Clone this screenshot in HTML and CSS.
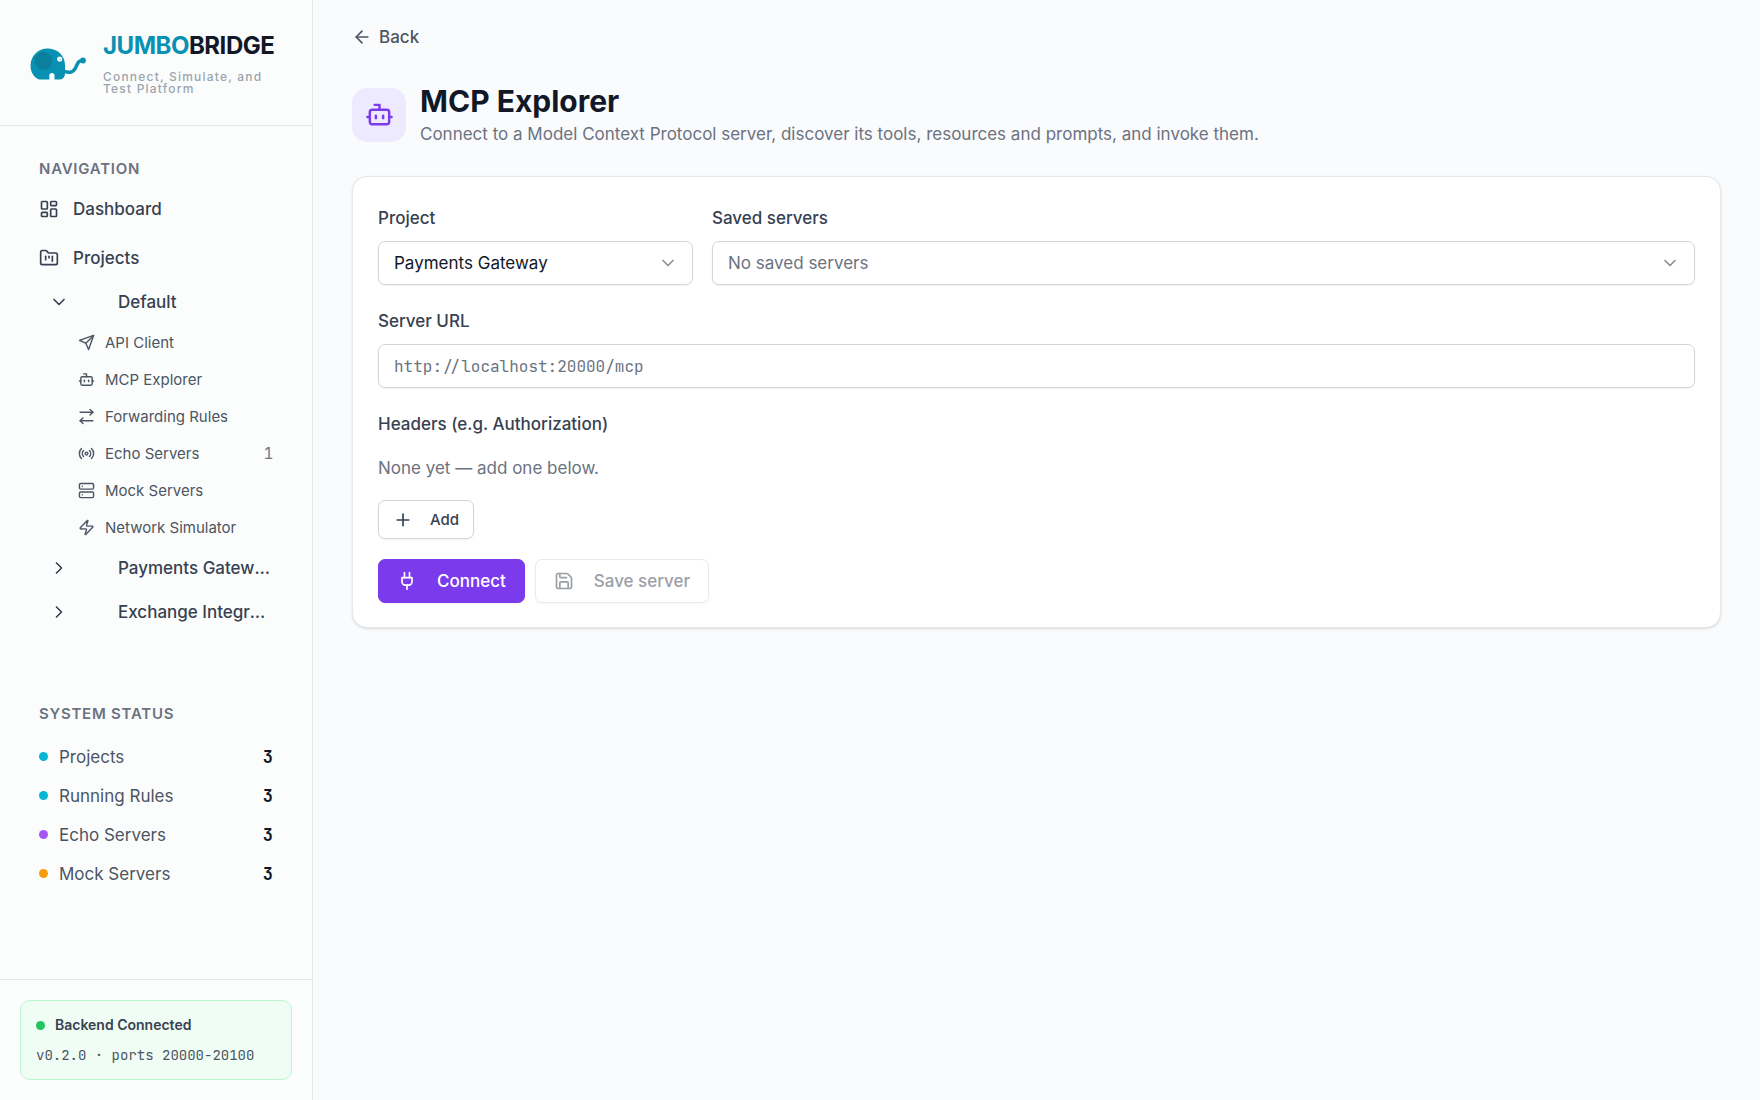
FILE: index.html
```html
<!DOCTYPE html>
<html lang="en">
<head>
    <meta charset="utf-8">
    <title>MCP Explorer - JumboBridge</title>
    <link rel="stylesheet" href="styles.css">
</head>
<body>
    <aside class="sidebar">
        <div class="brand">
            <svg class="logo" viewBox="0 0 56 32" aria-hidden="true">
                <path d="M0.500 17.500A17 17 0 0 1 17.500 .500C27 .500 35 7 35 17V26a5.500 5.500 0 0 1-5.500 5.500H24.500V27.500a2.600 2.600 0 0 0-5.200 0V31.500H9C4 29.500 .500 24 .500 17.500z" fill="#0891b2"/>
                <circle cx="13.500" cy="13" r="9" fill="#0e7490" opacity=".6"/>
                <path d="M33 22.500c5 3 10 2.500 12.500-2.500s2.500-7.500 7-7.500" fill="none" stroke="#0891b2" stroke-width="3.500" stroke-linecap="round"/>
                <circle cx="53" cy="12.500" r="2.900" fill="#0891b2"/>
                <circle cx="29.700" cy="11" r="2.600" fill="#fff"/>
                <circle cx="30.300" cy="11.400" r=".7" fill="#0891b2" opacity=".5"/>
            </svg>
            <div>
                <div class="brand-name"><span>JUMBO</span>BRIDGE</div>
                <div class="brand-tag">Connect, Simulate, and Test Platform</div>
            </div>
        </div>

        <nav class="nav">
            <h2 class="section-title">Navigation</h2>
            <div class="nav-main">
                <a class="nav-link" href="#">
                    <svg class="icon" viewBox="0 0 24 24"><rect x="3" y="3" width="7" height="9" rx="1"/><rect x="14" y="3" width="7" height="5" rx="1"/><rect x="14" y="12" width="7" height="9" rx="1"/><rect x="3" y="16" width="7" height="5" rx="1"/></svg>
                    Dashboard
                </a>
                <a class="nav-link" href="#">
                    <svg class="icon" viewBox="0 0 24 24"><path d="M4 20h16a2 2 0 0 0 2-2V8a2 2 0 0 0-2-2h-7.930a2 2 0 0 1-1.660-.900l-.820-1.200A2 2 0 0 0 7.930 3H4a2 2 0 0 0-2 2v13c0 1.100.900 2 2 2Z"/><path d="M8 10v4"/><path d="M12 10v2"/><path d="M16 10v6"/></svg>
                    Projects
                </a>
            </div>
            <button class="project" type="button" aria-expanded="true">
                <svg class="icon" viewBox="0 0 24 24"><path d="m6 9 6 6 6-6"/></svg>
                <span>Default</span>
            </button>
            <div class="sub-list">
                <a class="sub-link" href="#">
                    <svg class="icon" viewBox="0 0 24 24"><path d="m22 2-7 20-4-9-9-4Z"/><path d="M22 2 11 13"/></svg>
                    API Client
                </a>
                <a class="sub-link" href="#">
                    <svg class="icon" viewBox="0 0 24 24"><path d="M12 8V4H8"/><rect x="4" y="8" width="16" height="12" rx="2"/><path d="M2 14h2"/><path d="M20 14h2"/><path d="M15 13v2"/><path d="M9 13v2"/></svg>
                    MCP Explorer
                </a>
                <a class="sub-link" href="#">
                    <svg class="icon" viewBox="0 0 24 24"><path d="m17 2 4 4-4 4"/><path d="M3 6h18"/><path d="m7 22-4-4 4-4"/><path d="M21 18H3"/></svg>
                    Forwarding Rules
                </a>
                <a class="sub-link" href="#">
                    <svg class="icon" viewBox="0 0 24 24"><path d="M4.900 19.100C1 15.200 1 8.800 4.900 4.900"/><path d="M7.800 16.200c-2.300-2.300-2.300-6.100 0-8.500"/><circle cx="12" cy="12" r="2"/><path d="M16.200 7.800c2.300 2.300 2.300 6.100 0 8.500"/><path d="M19.100 4.900C23 8.800 23 15.100 19.100 19"/></svg>
                    Echo Servers
                    <span class="sub-count">1</span>
                </a>
                <a class="sub-link" href="#">
                    <svg class="icon" viewBox="0 0 24 24"><rect x="2" y="2" width="20" height="8" rx="2"/><rect x="2" y="14" width="20" height="8" rx="2"/><path d="M6 6h.010"/><path d="M6 18h.010"/></svg>
                    Mock Servers
                </a>
                <a class="sub-link" href="#">
                    <svg class="icon" viewBox="0 0 24 24"><path d="M4 14a1 1 0 0 1-.780-1.630l9.900-10.200a.5.5 0 0 1 .860.460l-1.920 6.020A1 1 0 0 0 13 10h7a1 1 0 0 1 .780 1.630l-9.900 10.200a.5.5 0 0 1-.860-.460l1.920-6.020A1 1 0 0 0 11 14z"/></svg>
                    Network Simulator
                </a>
            </div>
            <button class="project" type="button" aria-expanded="false">
                <svg class="icon" viewBox="0 0 24 24"><path d="m9 18 6-6-6-6"/></svg>
                <span>Payments Gateway</span>
            </button>
            <button class="project" type="button" aria-expanded="false">
                <svg class="icon" viewBox="0 0 24 24"><path d="m9 18 6-6-6-6"/></svg>
                <span>Exchange Integration</span>
            </button>
        </nav>

        <section class="status">
            <h2 class="section-title">System Status</h2>
            <ul class="status-list">
                <li><i class="dot cyan"></i>Projects<b>3</b></li>
                <li><i class="dot cyan"></i>Running Rules<b>3</b></li>
                <li><i class="dot purple"></i>Echo Servers<b>3</b></li>
                <li><i class="dot amber"></i>Mock Servers<b>3</b></li>
            </ul>
        </section>

        <footer class="sidebar-footer">
            <div class="backend">
                <div class="backend-title"><i class="dot green"></i>Backend Connected</div>
                <div class="backend-info">v0.2.0 · ports 20000-20100</div>
            </div>
        </footer>
    </aside>

    <main class="main">
        <a class="back" href="#">
            <svg class="icon" viewBox="0 0 24 24"><path d="m12 19-7-7 7-7"/><path d="M19 12H5"/></svg>
            Back
        </a>

        <header class="page-header">
            <div class="page-icon">
                <svg class="icon" viewBox="0 0 24 24"><path d="M12 8V4H8"/><rect x="4" y="8" width="16" height="12" rx="2"/><path d="M2 14h2"/><path d="M20 14h2"/><path d="M15 13v2"/><path d="M9 13v2"/></svg>
            </div>
            <div>
                <h1>MCP Explorer</h1>
                <p>Connect to a Model Context Protocol server, discover its tools, resources and prompts, and invoke them.</p>
            </div>
        </header>

        <form class="card">
            <div class="server-row">
                <div class="field">
                    <label for="project">Project</label>
                    <div class="select">
                        <select id="project">
                            <option>Payments Gateway</option>
                        </select>
                        <svg class="icon" viewBox="0 0 24 24"><path d="m6 9 6 6 6-6"/></svg>
                    </div>
                </div>
                <div class="field">
                    <label for="saved">Saved servers</label>
                    <div class="select">
                        <select id="saved" class="empty">
                            <option>No saved servers</option>
                        </select>
                        <svg class="icon" viewBox="0 0 24 24"><path d="m6 9 6 6 6-6"/></svg>
                    </div>
                </div>
            </div>
            <div class="field">
                <label for="url">Server URL</label>
                <input id="url" type="text" placeholder="http://localhost:20000/mcp">
            </div>
            <div class="headers">
                <h3>Headers (e.g. Authorization)</h3>
                <p>None yet — add one below.</p>
                <button class="btn btn-small" type="button">
                    <svg class="icon" viewBox="0 0 24 24"><path d="M5 12h14"/><path d="M12 5v14"/></svg>
                    Add
                </button>
            </div>
            <div class="actions">
                <button class="btn btn-primary" type="button">
                    <svg class="icon" viewBox="0 0 24 24"><path d="M12 22v-5"/><path d="M9 8V2"/><path d="M15 8V2"/><path d="M18 8v5a4 4 0 0 1-4 4h-4a4 4 0 0 1-4-4V8Z"/></svg>
                    Connect
                </button>
                <button class="btn" type="button" disabled>
                    <svg class="icon" viewBox="0 0 24 24"><path d="M15.200 3a2 2 0 0 1 1.400.600l3.800 3.800a2 2 0 0 1 .600 1.400V19a2 2 0 0 1-2 2H5a2 2 0 0 1-2-2V5a2 2 0 0 1 2-2z"/><path d="M17 21v-7a1 1 0 0 0-1-1H8a1 1 0 0 0-1 1v7"/><path d="M7 3v4a1 1 0 0 0 1 1h7"/></svg>
                    Save server
                </button>
            </div>
        </form>
    </main>
</body>
</html>
```

FILE: styles.css
```css
* {
    box-sizing: border-box;
}

body {
    margin: 0;
    min-height: 100vh;
    display: flex;
    font-family: Inter, "Liberation Sans", sans-serif;
    font-size: 17px;
    line-height: 24px;
    color: #111827;
    background: #fafbfd;
}

h1, h2, h3, p, ul {
    margin: 0;
    padding: 0;
}

a {
    color: inherit;
    text-decoration: none;
}

button, select, input {
    font: inherit;
    color: inherit;
}

button {
    cursor: pointer;
}

.icon {
    width: 20px;
    height: 20px;
    flex-shrink: 0;
    fill: none;
    stroke: currentColor;
    stroke-width: 2;
    stroke-linecap: round;
    stroke-linejoin: round;
}

/* sidebar */
.sidebar {
    width: 313px;
    flex-shrink: 0;
    display: flex;
    flex-direction: column;
    background: #fbfdfc;
    border-right: 1px solid #e5e7eb;
}

.brand {
    display: flex;
    align-items: center;
    gap: 17px;
    height: 126px;
    padding: 2px 30px 0;
    border-bottom: 1px solid #e5e7eb;
}

.logo {
    width: 56px;
    height: 32px;
    flex-shrink: 0;
}

.brand-name {
    font-size: 24px;
    font-weight: 700;
    line-height: 28px;
    letter-spacing: -0.02em;
}

.brand-name span {
    color: #0891b2;
}

.brand-tag {
    margin-top: 11px;
    font-size: 12px;
    font-weight: 500;
    line-height: 12px;
    letter-spacing: 0.1em;
    color: #9ca3af;
}

.nav {
    padding: 25px 39px 0;
    color: #374151;
}

.section-title {
    font-size: 15px;
    font-weight: 600;
    line-height: 36px;
    letter-spacing: 0.05em;
    text-transform: uppercase;
    color: #6b7280;
}

.nav-main {
    display: grid;
    gap: 5px;
}

.nav-link {
    display: flex;
    align-items: center;
    gap: 14px;
    height: 44px;
    font-weight: 500;
}

.project {
    display: flex;
    align-items: center;
    gap: 49px;
    width: 100%;
    height: 44px;
    padding: 0 0 0 10px;
    border: 0;
    background: none;
    font-weight: 500;
    text-align: left;
}

.project span {
    min-width: 0;
    overflow: hidden;
    text-overflow: ellipsis;
    white-space: nowrap;
}

.sub-list {
    padding-left: 39px;
    color: #4b5563;
}

.sub-link {
    display: flex;
    align-items: center;
    gap: 10px;
    height: 37px;
    font-size: 15px;
}

.sub-link .icon {
    width: 17px;
    height: 17px;
}

.sub-count {
    margin-left: auto;
    font-family: "JetBrains Mono", "DejaVu Sans Mono", monospace;
    color: #6b7280;
}

.status {
    padding: 62px 39px 0;
}

.status-list {
    margin-top: 5px;
    list-style: none;
    color: #4b5563;
}

.status-list li {
    display: flex;
    align-items: center;
    gap: 11px;
    height: 39px;
}

.status-list b {
    margin-left: auto;
    font-family: "JetBrains Mono", "DejaVu Sans Mono", monospace;
    color: #111827;
}

.dot {
    width: 9px;
    height: 9px;
    border-radius: 50%;
}

.cyan {
    background: #06b6d4;
}

.purple {
    background: #a855f7;
}

.amber {
    background: #f59e0b;
}

.green {
    background: #22c55e;
}

.sidebar-footer {
    margin-top: auto;
    padding: 20px;
    border-top: 1px solid #e5e7eb;
}

.backend {
    padding: 12px 15px;
    border: 1px solid #bbf7d0;
    border-radius: 10px;
    background: #f0fdf4;
}

.backend-title {
    display: flex;
    align-items: center;
    gap: 10px;
    font-size: 14px;
    font-weight: 600;
    color: #374151;
}

.backend-info {
    margin-top: 6px;
    font-family: "JetBrains Mono", "DejaVu Sans Mono", monospace;
    font-size: 14px;
    color: #4b5563;
}

/* main area */
.main {
    flex: 1;
    min-width: 0;
    padding: 25px 39px;
}

.back {
    display: inline-flex;
    align-items: center;
    gap: 7px;
    font-weight: 500;
    color: #4b5563;
}

.page-header {
    display: flex;
    align-items: center;
    gap: 14px;
    margin: 30px 0;
}

.page-icon {
    display: grid;
    place-items: center;
    width: 54px;
    height: 54px;
    border-radius: 15px;
    background: #ede9fe;
    color: #7c3aed;
}

.page-icon .icon {
    width: 29px;
    height: 29px;
}

.page-header h1 {
    font-size: 30px;
    font-weight: 700;
    line-height: 36px;
}

.page-header p {
    margin-top: 3px;
    color: #6b7280;
}

.card {
    padding: 29px 25px 24px;
    border: 1px solid #e5e7eb;
    border-radius: 15px;
    background: #fff;
    box-shadow: 0 1px 3px rgba(0, 0, 0, 0.1), 0 1px 2px -1px rgba(0, 0, 0, 0.1);
}

.server-row {
    display: grid;
    grid-template-columns: 315px 1fr;
    gap: 19px;
}

.field {
    margin-bottom: 24px;
}

.field label {
    display: block;
    margin-bottom: 11px;
    font-weight: 500;
    color: #374151;
}

.field input, .field select {
    display: block;
    width: 100%;
    height: 44px;
    padding: 0 15px;
    border: 1px solid #d1d5db;
    border-radius: 7px;
    background: #fff;
    box-shadow: 0 1px 2px rgba(0, 0, 0, 0.05);
}

.field input {
    font-family: "JetBrains Mono", "DejaVu Sans Mono", monospace;
    font-size: 16px;
}

.field input::placeholder {
    color: #6b7280;
}

.select {
    position: relative;
}

.select select {
    appearance: none;
}

.select .empty {
    color: #6b7280;
}

.select .icon {
    position: absolute;
    top: 12px;
    right: 15px;
    color: #8b8f97;
    pointer-events: none;
}

.headers {
    display: grid;
    justify-items: start;
    gap: 20px;
    margin-bottom: 20px;
}

.headers h3 {
    font-size: 17px;
    font-weight: 500;
    color: #374151;
}

.headers p {
    color: #6b7280;
}

.actions {
    display: flex;
    gap: 10px;
}

.btn {
    display: inline-flex;
    align-items: center;
    gap: 20px;
    height: 44px;
    padding: 0 18px;
    border: 1px solid #d1d5db;
    border-radius: 7px;
    background: #fff;
    box-shadow: 0 1px 2px rgba(0, 0, 0, 0.05);
    font-weight: 500;
    color: #374151;
}

.btn-small {
    gap: 17px;
    height: 39px;
    padding: 0 14px;
    font-size: 15px;
}

.btn-primary {
    border-color: #7c3aed;
    background: #7c3aed;
    color: #fff;
}

.btn:disabled {
    opacity: 0.5;
    cursor: default;
}
```
